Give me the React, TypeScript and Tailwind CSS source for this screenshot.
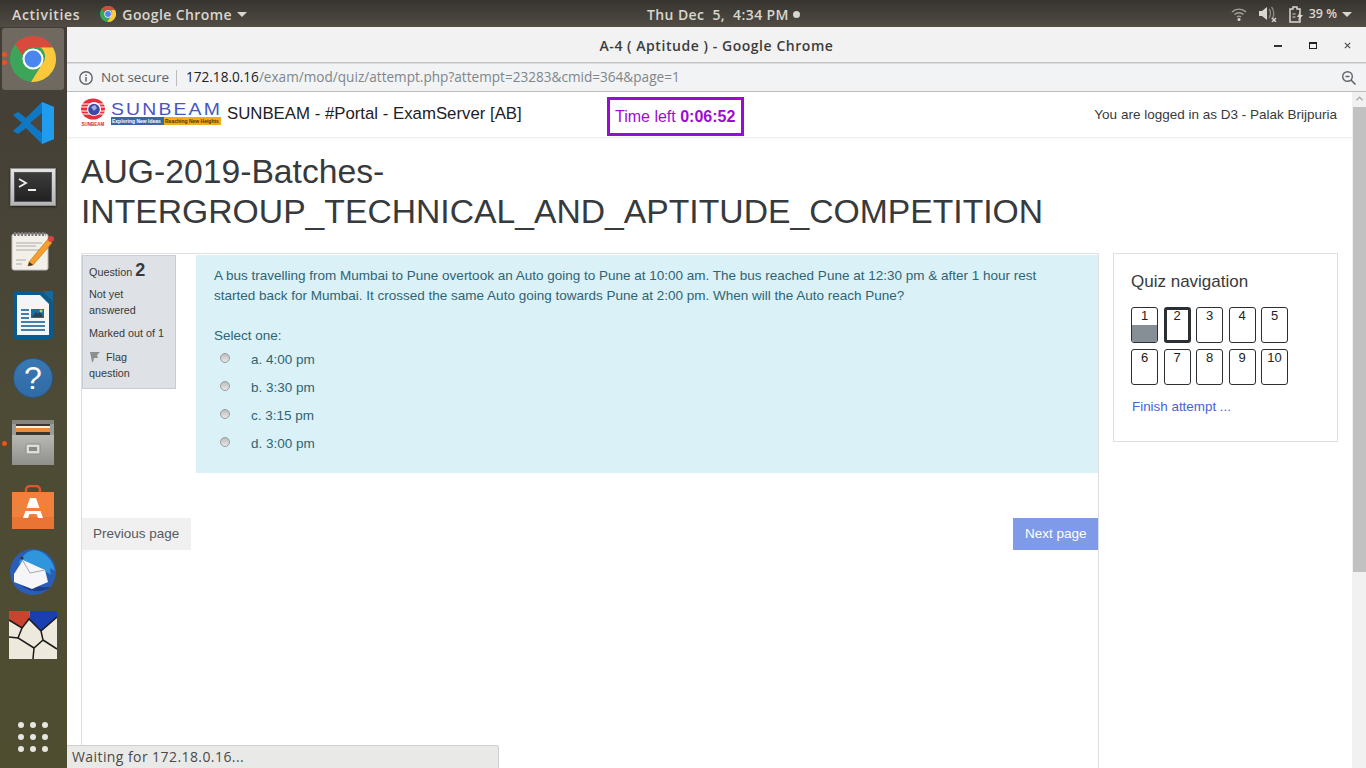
import { ChevronUp } from 'lucide-react';

const ubuntu = 'font-["Open_Sans","Noto_Sans",sans-serif]';

function ChromeIcon({ size }: { size: number }) {
  return (
    <svg width={size} height={size} viewBox="0 0 48 48">
      <circle cx="24" cy="24" r="24" fill="#3ba55a" />
      <path d="M24 0a24 24 0 0 1 20.800 12H24a12 12 0 0 0-11.300 8L5.500 8.700A24 24 0 0 1 24 0z" fill="#d94a3d" />
      <path d="M44.800 12A24 24 0 0 1 22 47.900L33 30a12 12 0 0 0-1-18z" fill="#fdc93a" />
      <circle cx="24" cy="24" r="11" fill="#fff" />
      <circle cx="24" cy="24" r="8.800" fill="#4a86ee" />
    </svg>
  );
}

function VsCode() {
  return (
    <svg width="42" height="42" viewBox="0 0 42 42">
      <path d="M30 0 42 5v32l-12 5-16-16-8 6-5-3 9-8-9-8 5-3 8 6z" fill="#0f78c4" />
      <path d="M30 0 42 5v32l-12 5z" fill="#1f9cf0" />
      <path d="M30 11 18 21l12 10z" fill="#4a4640" />
    </svg>
  );
}

function Terminal() {
  return (
    <div className="w-[46px] h-[38px] bg-gradient-to-b from-[#e4e4e4] to-[#b4b4b4] border border-[#8e8e8e] p-[3px] shadow-[0_1px_2px_rgba(0,0,0,.5)]">
      <div className="w-full h-full bg-gradient-to-b from-[#3c3c3c] to-[#222] border border-[#555] pl-[3px] pt-[5px]">
        <svg width="24" height="16" viewBox="0 0 24 16">
          <path d="M1 1l7 4-7 4" fill="none" stroke="#eee" strokeWidth="1.800" />
          <path d="M10 12h8" stroke="#eee" strokeWidth="2" />
        </svg>
      </div>
    </div>
  );
}

function Notepad() {
  return (
    <svg width="46" height="40" viewBox="0 0 46 40">
      <rect x="2" y="3" width="36" height="36" rx="2" fill="#f2f0e8" stroke="#bbb" />
      <path d="M4 3h32" stroke="#777" strokeWidth="4" strokeDasharray="2 1.500" />
      <path d="M6 12h26M6 15h20M6 19h24M6 29h10M6 33h6" stroke="#aaa" strokeWidth="1.100" />
      <path d="M19 31 38 8l4 4-19 22-5 1z" fill="#f5a02c" stroke="#b56a12" strokeWidth=".6" />
      <circle cx="41" cy="8" r="3" fill="#d8433b" />
      <path d="M18 35l1.500-4 3.500 3z" fill="#333" />
    </svg>
  );
}

function Writer() {
  return (
    <svg width="40" height="48" viewBox="0 0 40 48">
      <path d="M2 0h26l12 12v33a3 3 0 0 1-3 3H3a3 3 0 0 1-3-3V2a2 2 0 0 1 2-2z" fill="#0b5a8d" />
      <path d="M4 4h23l9 9v31H4z" fill="#f3f5f6" />
      <path d="M29 0l11 11V0z" fill="#0f6aa3" />
      <rect x="18" y="18" width="13" height="9" fill="#1a6ea3" />
      <path d="M19 26l4-5 2 2 2-3 3 6z" fill="#27435c" />
      <circle cx="28" cy="20" r="1.500" fill="#e8c24d" />
      <path d="M8 19h8M8 23h8M8 27h8M8 31h24M8 35h24M8 39h24" stroke="#0b5a8d" strokeWidth="1.600" />
    </svg>
  );
}

function Help() {
  return (
    <div className="w-[40px] h-[40px] -mt-[3px] rounded-full bg-gradient-to-b from-[#3a78b4] to-[#2f6ba6] border border-[#28578a] flex items-center justify-center text-white text-[32px] font-['Liberation_Sans',sans-serif] leading-none">
      ?
    </div>
  );
}

function Files() {
  return (
    <svg width="42" height="46" viewBox="0 0 42 46">
      <defs>
        <linearGradient id="cab" x1="0" y1="0" x2="0" y2="1">
          <stop offset="0" stopColor="#b8b8b5" />
          <stop offset="1" stopColor="#8f908c" />
        </linearGradient>
      </defs>
      <rect x="0" y="0" width="42" height="45" rx="2" fill="#9b9c98" />
      <rect x="0" y="0" width="42" height="4" fill="#85857f" />
      <rect x="4" y="4" width="34" height="12" fill="#3b3530" />
      <rect x="4" y="6" width="34" height="2" fill="#f5f0e0" />
      <rect x="4" y="8" width="34" height="4" fill="#e98a3c" />
      <rect x="0" y="15" width="42" height="30" fill="url(#cab)" />
      <rect x="14" y="24" width="14" height="10" rx="1" fill="#dcdcda" stroke="#8a8a88" />
      <rect x="17" y="27" width="8" height="4" fill="#8a8b88" />
    </svg>
  );
}

function Store() {
  return (
    <svg width="42" height="44" viewBox="0 0 42 44">
      <path d="M14 9V5a4 4 0 0 1 4-4h6a4 4 0 0 1 4 4v4" fill="none" stroke="#d9572b" strokeWidth="2.500" />
      <rect x="0" y="7" width="42" height="37" fill="#f27f3c" />
      <rect x="0" y="32" width="42" height="12" fill="#ea7433" />
      <path d="M18 13h6l7 20h-5l-1.500-4h-7L16 33h-5z" fill="#fff" />
      <rect x="13" y="23" width="16" height="3" fill="#f27f3c" />
    </svg>
  );
}

function Thunderbird() {
  return (
    <svg width="48" height="48" viewBox="0 0 48 48">
      <circle cx="24" cy="25" r="23" fill="#2a5db5" />
      <path d="M8 34c8 10 22 14 34 6-10 1-19-1-26-8z" fill="#1b3f8c" />
      <path d="M10 16C14 6 22 1 30 4c8 3 14 10 16 20l-5-3 1 7-6-4 1 6-7-6z" fill="#2f95dd" />
      <path d="M5 27l9-14 22 10 3 12-16 7-18-7z" fill="#f6f6f8" />
      <path d="M14 14l7 12 15-3" fill="none" stroke="#a8a8b0" />
      <circle cx="13" cy="11" r="1.500" fill="#333" />
    </svg>
  );
}

function Mosaic() {
  return (
    <svg width="48" height="48" viewBox="0 0 48 48">
      <rect width="48" height="48" fill="#ede9dc" />
      <path d="M0 0h21l-1 8-7 9L0 9z" fill="#c9432f" />
      <path d="M21 0h27v6L32 20 20 8z" fill="#1a3fb0" />
      <path d="M0 9l13 8 7-9 12 12 16-14M13 17l-4 10 16 10 9-8-2-9M9 27 0 26M25 37l-1 11M34 29l14 9" fill="none" stroke="#1b1b1b" strokeWidth="1.500" />
    </svg>
  );
}

const dockIcons = [
  <VsCode />,
  <Terminal />,
  <Notepad />,
  <Writer />,
  <Help />,
  <Files />,
  <Store />,
  <Thunderbird />,
  <Mosaic />,
];

function Dock() {
  return (
    <aside className="w-[67px] shrink-0 flex flex-col items-center bg-gradient-to-b from-[#423d37] via-[#4d4a36] to-[#4f4d30] relative">
      <div className="relative h-[64px] w-full flex items-center justify-center pr-[1px]">
        <div className="w-[62px] h-[62px] rounded-[3px] bg-[#6f6960] flex items-center justify-center">
          <ChromeIcon size={46} />
        </div>
        <span className="absolute left-[2px] top-[25px] w-[5px] h-[5px] rounded-full bg-[#e95420]" />
        <span className="absolute left-[2px] top-[33px] w-[5px] h-[5px] rounded-full bg-[#e95420]" />
      </div>
      {dockIcons.map((icon, i) => (
        <div key={i} className="relative h-[64px] w-full flex items-center justify-center pr-[1px]">
          {icon}
          {i === 5 && <span className="absolute left-[2px] top-[30px] w-[5px] h-[5px] rounded-full bg-[#e95420]" />}
        </div>
      ))}
      <div className="mt-auto mb-[16px] mr-[1px] grid grid-cols-3 gap-x-[6px] gap-y-[6px]">
        {Array.from({ length: 9 }).map((_, i) => (
          <span key={i} className="w-[6px] h-[6px] rounded-full bg-[#e6e6e2]" />
        ))}
      </div>
    </aside>
  );
}

function TopBar() {
  return (
    <header className={`h-[27px] shrink-0 pt-[1px] bg-gradient-to-b from-[#37342f] to-[#514d45] text-[#d9d6cf] text-[14px] font-semibold flex items-center ${ubuntu}`}>
      <span className="ml-[12px] tracking-[.7px]">Activities</span>
      <span className="ml-[20px]"><ChromeIcon size={16} /></span>
      <span className="ml-[6px] tracking-[.4px]">Google Chrome</span>
      <span className="ml-[5px] border-x-[5px] border-x-transparent border-t-[5px] border-t-[#d9d6cf]" />
      <div className="ml-[400px] flex items-center tracking-[.4px]">
        <span className="whitespace-pre">Thu Dec  5,  4:34 PM</span>
        <span className="ml-[4px] w-[7px] h-[7px] rounded-full bg-[#d9d6cf]" />
      </div>
      <div className="ml-auto mr-[14px] flex items-center">
        <svg width="16" height="14" viewBox="0 0 16 14" className="mr-[12px]">
          <path d="M1 5a10 10 0 0 1 14 0M3.500 7.500a6.500 6.500 0 0 1 9 0M6 10a3 3 0 0 1 4 0" fill="none" stroke="#a5a29b" strokeWidth="1.400" />
          <circle cx="8" cy="12.500" r="1.500" fill="#d9d6cf" />
        </svg>
        <svg width="18" height="16" viewBox="0 0 18 16" className="mr-[12px]">
          <path d="M0 5h3l5-4v13l-5-4H0z" fill="#d9d6cf" />
          <path d="M10 3c2 2 2 7 0 9M12.500 1c3 3 3 10 0 12" fill="none" stroke="#8f8c85" strokeWidth="1.300" />
          <path d="M13 12l4 4m0-4-4 4" stroke="#d9d6cf" strokeWidth="1.400" />
        </svg>
        <svg width="15" height="17" viewBox="0 0 15 17" className="mr-[5px]">
          <path d="M1 3h3V1h4v2h3v13H1z" fill="none" stroke="#d9d6cf" strokeWidth="1.500" />
          <path d="M3.500 8h3M3.500 11h3" stroke="#d9d6cf" strokeWidth="1.200" />
          <path d="M11 6l-3 5h2l-1 4 5-6h-3z" fill="#d9d6cf" />
        </svg>
        <span className="text-[12.500px]">39 %</span>
        <span className="ml-[5px] border-x-[5px] border-x-transparent border-t-[5px] border-t-[#d9d6cf]" />
      </div>
    </header>
  );
}

function ChromeBars() {
  return (
    <div className={`shrink-0 ${ubuntu}`}>
      <div className="h-[36px] bg-[#f2f2f2] border-b border-b-[#c4c4c0] flex items-center justify-center relative">
        <span className="text-[14px] font-semibold text-[#3d3d3d] tracking-[.55px] translate-y-[1px]">A-4 ( Aptitude ) - Google Chrome</span>
        <div className="absolute right-[15px] top-[15px] flex items-center gap-[27px]">
          <span className="w-[8px] h-[2px] bg-[#333]" />
          <span className="w-[8px] h-[7px] border border-[#222] border-t-2" />
          <svg width="7" height="7" viewBox="0 0 8 8"><path d="M1 1l6 6m0-6-6 6" stroke="#444" strokeWidth="1.200" /></svg>
        </div>
      </div>
      <div className="h-[29px] bg-[#f1f3f4] border-b border-b-[#bdbdbd] flex items-center text-[13.500px] border-t border-t-[#dcdcdc]">
        <svg width="16" height="16" viewBox="0 0 16 16" className="ml-[11px]">
          <circle cx="8" cy="8" r="6.200" fill="none" stroke="#5f6368" strokeWidth="1.400" />
          <path d="M8 7v4.500M8 4.500v1.400" stroke="#5f6368" strokeWidth="1.500" />
        </svg>
        <span className="ml-[7px] text-[#5f6368] tracking-[-.05px]">Not secure</span>
        <span className="ml-[7px] w-px h-[16px] bg-[#bcbcbc]" />
        <span className="ml-[9px] text-[13.600px] text-[#202124]">172.18.0.16<span className="text-[#80868b]">/exam/mod/quiz/attempt.php?attempt=23283&amp;cmid=364&amp;page=1</span></span>
        <svg width="16" height="16" viewBox="0 0 16 16" className="ml-auto mr-[9px]">
          <circle cx="6.500" cy="6.500" r="4.800" fill="none" stroke="#5f6368" strokeWidth="1.400" />
          <path d="M4.500 6.500h4M10 10l4.500 4.500" stroke="#5f6368" strokeWidth="1.500" />
        </svg>
      </div>
    </div>
  );
}

function Logo() {
  return (
    <div className="flex items-start w-[146px] shrink-0 ml-[14px]">
      <svg width="26" height="33" viewBox="0 0 26 33" className="shrink-0 mt-[6px]">
        <ellipse cx="12" cy="11" rx="12" ry="10.500" fill="#e62f38" />
        <path d="M0 6h24M0 9h24M0 13h24M0 16h24" stroke="#fff" strokeWidth="1" />
        <circle cx="13" cy="11" r="7" fill="#fff" />
        <circle cx="13" cy="11.500" r="5.800" fill="#3d4aa8" />
        <path d="M10 9l4-2 2 3-3 3z" fill="#9fb0e0" />
        <text x="12" y="28" textAnchor="middle" fontSize="4.500" fontWeight="700" fill="#d8262e" fontFamily="Liberation Sans">SUNBEAM</text>
      </svg>
      <div className="ml-[4px] mt-[10px] w-[110px]">
        <div className="text-[17px] leading-[15px] h-[15px] text-[#4a56c0] font-['Liberation_Sans',sans-serif] tracking-[1.900px] scale-x-[1.14] origin-left">SUNBEAM</div>
        <div className="flex h-[8px] text-[5px] leading-[8px] font-bold font-['Liberation_Sans',sans-serif] whitespace-nowrap">
          <span className="w-[53px] pl-[1px] bg-[#3f63a8] text-white">Exploring New Ideas</span>
          <span className="flex-1 pl-[1px] bg-[#f7a81b] text-[#5b3300]">Reaching New Heights</span>
        </div>
      </div>
    </div>
  );
}

function Navbar() {
  return (
    <nav className="h-[46px] shrink-0 flex items-start border-b border-b-[#ededed] shadow-[0_1px_2px_rgba(0,0,0,.04)]">
      <Logo />
      <span className="mt-[12px] text-[16.800px] leading-[20px] text-[#1d2125]">SUNBEAM - #Portal - ExamServer [AB]</span>
      <div className="ml-[85px] mt-[5px] h-[39px] w-[137px] border-[3px] border-[#9a0ad6] flex items-center justify-center text-[16px] text-[#a00ad8] whitespace-nowrap">
        Time left&nbsp;<b>0:06:52</b>
      </div>
      <span className="ml-auto mr-[15px] mt-[14px] text-[13.500px] leading-[17px] text-[#373a3c]">You are logged in as D3 - Palak Brijpuria</span>
    </nav>
  );
}

function QuestionInfo() {
  return (
    <div className="w-[94px] h-[134px] shrink-0 bg-[#dee2e6] border border-[#c8ccd2] pl-[6px] pt-[4px] text-[10.800px] leading-[16px] text-[#373a3c]">
      <div className="h-[25px] flex items-baseline">Question <b className="ml-[3px] text-[18px] leading-[20px]">2</b></div>
      <div className="mt-[1px]">Not yet<br />answered</div>
      <div className="mt-[7px]">Marked out of 1</div>
      <div className="mt-[8px]">
        <svg width="12" height="12" viewBox="0 0 12 12" className="inline mr-[5px] align-[-2px]">
          <path d="M1 1h10L8 4l1 3H5L4 11H3z" fill="#8b8f90" />
        </svg>
        Flag<br />question
      </div>
    </div>
  );
}

function Option({ label }: { label: string }) {
  return (
    <div className="h-[28px] flex items-start pl-[6px]">
      <span className="w-[10px] h-[10px] mt-[5px] rounded-full bg-gradient-to-b from-[#bdbdbd] to-[#e8e8e8] border border-[#9a9a9a]" />
      <span className="ml-[21px] mt-[2px] text-[#2f6473]">{label}</span>
    </div>
  );
}

function Question() {
  return (
    <div className="flex items-start">
      <QuestionInfo />
      <div className="ml-[20px] flex-1 h-[218px] bg-[#daf1f8] pl-[18px] pr-[40px] pt-[11px] text-[13.500px] leading-[20px] text-[#2f6473]">
        <p>A bus travelling from Mumbai to Pune overtook an Auto going to Pune at 10:00 am. The bus reached Pune at 12:30 pm &amp; after 1 hour rest started back for Mumbai. It crossed the same Auto going towards Pune at 2:00 pm. When will the Auto reach Pune?</p>
        <p className="mt-[20px]">Select one:</p>
        <div className="mt-[2px]">
          <Option label="a. 4:00 pm" />
          <Option label="b. 3:30 pm" />
          <Option label="c. 3:15 pm" />
          <Option label="d. 3:00 pm" />
        </div>
      </div>
    </div>
  );
}

function QuizNav() {
  const nums = [1, 2, 3, 4, 5, 6, 7, 8, 9, 10];
  return (
    <div className="w-[225px] h-[189px] shrink-0 border border-[#dfdfdf] pl-[17px] pt-[17px] ml-[14px]">
      <h3 className="text-[17px] leading-[22px] text-[#373a3c]">Quiz navigation</h3>
      <div className="mt-[14px] grid grid-cols-[repeat(5,27px)] gap-x-[5.500px] gap-y-[6px]">
        {nums.map(n => (
          <div
            key={n}
            className={`relative h-[36px] rounded-[3px] border-[#2b2f33] text-[13px] leading-[15px] text-center text-[#1d2125] overflow-hidden ${n === 2 ? 'border-[3px]' : 'border'}`}
          >
            {n === 1 && <span className="absolute left-0 right-0 bottom-0 h-[17px] bg-[#868e96]" />}
            <span className={n === 2 ? 'relative -top-[2px]' : 'relative'}>{n}</span>
          </div>
        ))}
      </div>
      <a className="block mt-[13px] pl-[1px] text-[13.400px] leading-[17px] text-[#4a62d8]">Finish attempt ...</a>
    </div>
  );
}

function Page() {
  return (
    <div className="flex-1 min-w-0 flex flex-col font-['Liberation_Sans',sans-serif] overflow-hidden">
      <Navbar />
      <div className="pl-[14px] pr-[14px] flex-1 min-h-0 flex flex-col">
        <h1 className="mt-[13px] text-[33.700px] leading-[40px] text-[#373a3c]">AUG-2019-Batches-<br />INTERGROUP_TECHNICAL_AND_APTITUDE_COMPETITION</h1>
        <div className="mt-[22px] flex items-start flex-1 min-h-0">
          <div className="w-[1018px] shrink-0 h-full border-x border-t border-[#dfdfdf] pt-[1px]">
            <Question />
            <div className="mt-[45px] flex justify-between text-[13.500px] leading-[32px]">
              <span className="pl-[11px] pr-[12px] h-[32px] bg-[#f0f0f0] text-[#55595c]">Previous page</span>
              <span className="pl-[12px] pr-[11.500px] h-[32px] bg-[#7f9ae8] text-white">Next page</span>
            </div>
          </div>
          <QuizNav />
        </div>
      </div>
    </div>
  );
}

function Scrollbar() {
  return (
    <div className="w-[14px] shrink-0 bg-[#f1f1f1] flex flex-col items-center">
      <ChevronUp size={11} strokeWidth={3} className="text-[#a3a3a3] mt-[1px]" />
      <div className="mt-[3px] w-[13px] ml-[1px] h-[465px] bg-[#c1c1c1]" />
    </div>
  );
}

export default function App() {
  return (
    <div className="w-[1366px] h-[768px] flex flex-col overflow-hidden bg-white">
      <TopBar />
      <div className="flex flex-1 min-h-0">
        <Dock />
        <main className="flex-1 min-w-0 flex flex-col relative">
          <ChromeBars />
          <div className="flex-1 min-h-0 flex bg-white">
            <Page />
            <Scrollbar />
          </div>
          <div className={`absolute left-0 bottom-0 w-[432px] h-[23px] bg-[#e9e9e7] border-t border-r border-[#cfcfcf] rounded-tr-[3px] pl-[5px] text-[14px] leading-[22px] text-[#4a4a4a] tracking-[.42px] ${ubuntu}`}>
            Waiting for 172.18.0.16...
          </div>
        </main>
      </div>
    </div>
  );
}
